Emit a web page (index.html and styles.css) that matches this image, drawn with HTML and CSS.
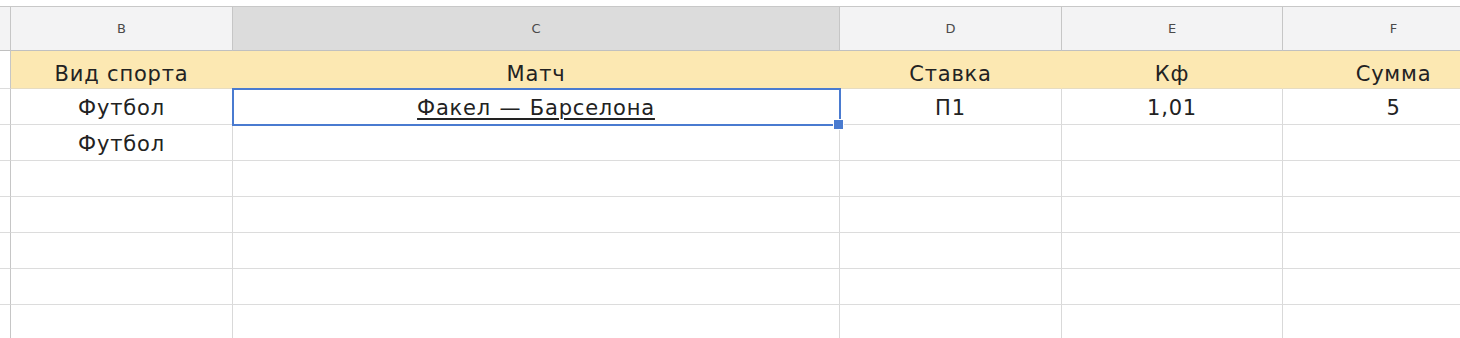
FILE: index.html
```html
<!DOCTYPE html>
<html lang="ru">
<head>
    <meta charset="UTF-8">
    <title>Ставки</title>
    <link rel="stylesheet" href="styles.css">
</head>
<body>
    <div class="sheet">
        <!-- заголовки столбцов -->
        <div class="cell col-head corner"></div>
        <div class="cell col-head">B</div>
        <div class="cell col-head active">C</div>
        <div class="cell col-head">D</div>
        <div class="cell col-head">E</div>
        <div class="cell col-head">F</div>

        <!-- шапка таблицы -->
        <div class="cell row-num"></div>
        <div class="cell title">Вид спорта</div>
        <div class="cell title">Матч</div>
        <div class="cell title">Ставка</div>
        <div class="cell title">Кф</div>
        <div class="cell title">Сумма</div>

        <div class="cell row-num"></div>
        <div class="cell">Футбол</div>
        <div class="cell selected"><span class="link">Факел — Барселона</span><span class="handle"></span></div>
        <div class="cell">П1</div>
        <div class="cell">1,01</div>
        <div class="cell">5</div>

        <div class="cell row-num"></div>
        <div class="cell">Футбол</div>
        <div class="cell"></div>
        <div class="cell"></div>
        <div class="cell"></div>
        <div class="cell"></div>

        <div class="cell row-num"></div><div class="cell"></div><div class="cell"></div><div class="cell"></div><div class="cell"></div><div class="cell"></div>
        <div class="cell row-num"></div><div class="cell"></div><div class="cell"></div><div class="cell"></div><div class="cell"></div><div class="cell"></div>
        <div class="cell row-num"></div><div class="cell"></div><div class="cell"></div><div class="cell"></div><div class="cell"></div><div class="cell"></div>
        <div class="cell row-num"></div><div class="cell"></div><div class="cell"></div><div class="cell"></div><div class="cell"></div><div class="cell"></div>
        <div class="cell row-num"></div><div class="cell"></div><div class="cell"></div><div class="cell"></div><div class="cell"></div><div class="cell"></div>
    </div>
</body>
</html>
```

FILE: styles.css
```css
/* ТАБЛИЦА */
body {
    margin: 0;
    background: #fff;
    font-family: "DejaVu Sans", Verdana, sans-serif;
    color: #222;
    overflow: hidden;
    height: 338px;
}

.sheet {
    margin-top: 6px;
    border-top: 1px solid #c8c8c8;
    display: grid;
    width: 1510px;
    grid-template-columns: 11px 222px 607px 222px 221px 222px;
    grid-template-rows: 44px 38px repeat(7, 36px);
}

.cell {
    box-sizing: border-box;
    border-right: 1px solid #d9d9d9;
    border-bottom: 1px solid #dcdcdc;
    display: flex;
    align-items: flex-end;
    justify-content: center;
    padding-bottom: 4px;
    font-size: 21px;
    letter-spacing: 0.8px;
    white-space: nowrap;
    position: relative;
}

/* Заголовки столбцов A, B, C... */
.col-head {
    background: #f3f3f4;
    border-right-color: #c6c6c6;
    border-bottom-color: #c0c0c0;
    align-items: center;
    padding-bottom: 0;
    font-size: 13px;
    letter-spacing: 0;
    color: #4a4a4a;
}
.col-head.active { background: #dcdcdc; }

.row-num { border-right-color: #c6c6c6; }

/* Шапка с названиями */
.title {
    background: #fce8b2;
    border-right-color: #fce8b2;
    border-bottom-color: #e6dcc2;
    padding-bottom: 2px;
}

.link {
    text-decoration: underline;
    text-decoration-thickness: 2px;
    text-underline-offset: 3px;
    word-spacing: 1px;
}

/* Выделенная ячейка */
.selected {
    outline: 2px solid #4a7bd0;
    outline-offset: -1px;
    z-index: 2;
}
.handle {
    position: absolute;
    right: -5px;
    bottom: -6px;
    width: 9px;
    height: 9px;
    background: #4a7bd0;
    border: 1px solid #fff;
}
```
